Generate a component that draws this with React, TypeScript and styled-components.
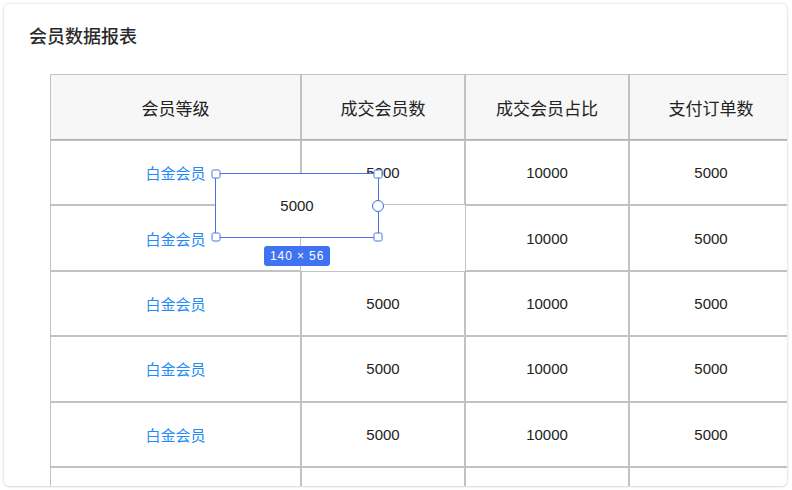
import React from "react";
import styled, { createGlobalStyle } from "styled-components";

const Global = createGlobalStyle`
  html, body { margin: 0; padding: 0; background: #ffffff; }
  body { font-family: "Liberation Sans", "Noto Sans CJK SC", sans-serif; }
`;

const Page = styled.div`
  width: 792px;
  height: 490px;
  padding: 4px;
  box-sizing: border-box;
`;

const Card = styled.div`
  width: 783px;
  height: 482px;
  background: #fff;
  border-radius: 5px;
  box-shadow: 0 0 3px rgba(0, 0, 0, 0.18), 0 1px 2px rgba(0, 0, 0, 0.08);
  overflow: hidden;
  box-sizing: border-box;
  padding: 19px 0 0 25px;
  display: flex;
  flex-direction: column;
  gap: 26px;
`;

const Title = styled.h1`
  margin: 0;
  font-family: "Noto Sans CJK SC", sans-serif;
  font-size: 18px;
  font-weight: 500;
  line-height: 25px;
  color: #2b2b2b;
`;

const TableWrap = styled.div`
  position: relative;
  margin-left: 21px;
  width: 743px;
`;

const Table = styled.table`
  border-collapse: separate;
  border-spacing: 0;
  table-layout: fixed;
  width: 743px;
`;

const Th = styled.th`
  height: 64px;
  padding: 0;
  background: #f7f7f7;
  border: 1px solid #c2c2c2;
  border-bottom-color: #b0b0b0;
  font-family: "Noto Sans CJK SC", sans-serif;
  font-size: 17px;
  font-weight: 400;
  color: #222;
  text-align: center;
`;

const Td = styled.td<{ $link?: boolean; $empty?: boolean }>`
  height: 63.4px;
  padding: 0;
  border: ${(p) => (p.$empty ? "1px solid transparent" : "1px solid #c2c2c2")};
  text-align: center;
  font-family: ${(p) =>
    p.$link ? `"Noto Sans CJK SC", sans-serif` : `"Liberation Sans", "Noto Sans CJK SC", sans-serif`};
  font-size: 15px;
  color: ${(p) => (p.$link ? "#1f8bf5" : "#222")};
`;

const SelectBox = styled.div`
  position: absolute;
  left: 165px;
  top: 99px;
  width: 164px;
  height: 65px;
  box-sizing: border-box;
  border: 1px solid #4c74e2;
  background: #fff;
  display: flex;
  align-items: center;
  justify-content: center;
  font-family: "Liberation Sans", sans-serif;
  font-size: 15px;
  color: #222;
`;

const Handle = styled.span<{ $x: string; $y: string }>`
  position: absolute;
  width: 9px;
  height: 9px;
  box-sizing: border-box;
  background: #fff;
  border: 1px solid #4c74e2;
  border-radius: 2px;
  left: ${(p) => p.$x};
  top: ${(p) => p.$y};
  transform: translate(-50%, -50%);
`;

const RoundHandle = styled.span`
  position: absolute;
  width: 12px;
  height: 12px;
  box-sizing: border-box;
  background: #fff;
  border: 1.5px solid #3f6ae0;
  border-radius: 50%;
  left: 100%;
  top: 50%;
  transform: translate(-50%, -50%);
`;

const SizeTag = styled.div`
  position: absolute;
  left: 214px;
  top: 172px;
  height: 20px;
  padding: 0 6px;
  border-radius: 3px;
  background: #3f73f1;
  color: #fff;
  font-family: "Liberation Sans", sans-serif;
  font-size: 12px;
  line-height: 20px;
  letter-spacing: 0.9px;
`;

const headers = ["会员等级", "成交会员数", "成交会员占比", "支付订单数"];
const widths = [251, 164, 164, 164];

export default function App() {
  const rows = [0, 1, 2, 3, 4];
  return (
    <Page>
      <Global />
      <Card>
        <Title>会员数据报表</Title>
        <TableWrap>
          <Table>
            <colgroup>
              {widths.map((w, i) => (
                <col key={i} style={{ width: w }} />
              ))}
            </colgroup>
            <thead>
              <tr>
                {headers.map((h) => (
                  <Th key={h}>{h}</Th>
                ))}
              </tr>
            </thead>
            <tbody>
              {rows.map((r) => (
                <tr key={r}>
                  <Td $link>白金会员</Td>
                  {r === 1 ? <Td $empty /> : <Td>5000</Td>}
                  <Td>10000</Td>
                  <Td>5000</Td>
                </tr>
              ))}
              <tr>
                <Td />
                <Td />
                <Td />
                <Td />
              </tr>
            </tbody>
          </Table>
          <SelectBox>
            5000
            <Handle $x="0%" $y="0%" />
            <Handle $x="100%" $y="0%" />
            <Handle $x="0%" $y="100%" />
            <Handle $x="100%" $y="100%" />
            <RoundHandle />
          </SelectBox>
          <SizeTag>140 × 56</SizeTag>
        </TableWrap>
      </Card>
    </Page>
  );
}
